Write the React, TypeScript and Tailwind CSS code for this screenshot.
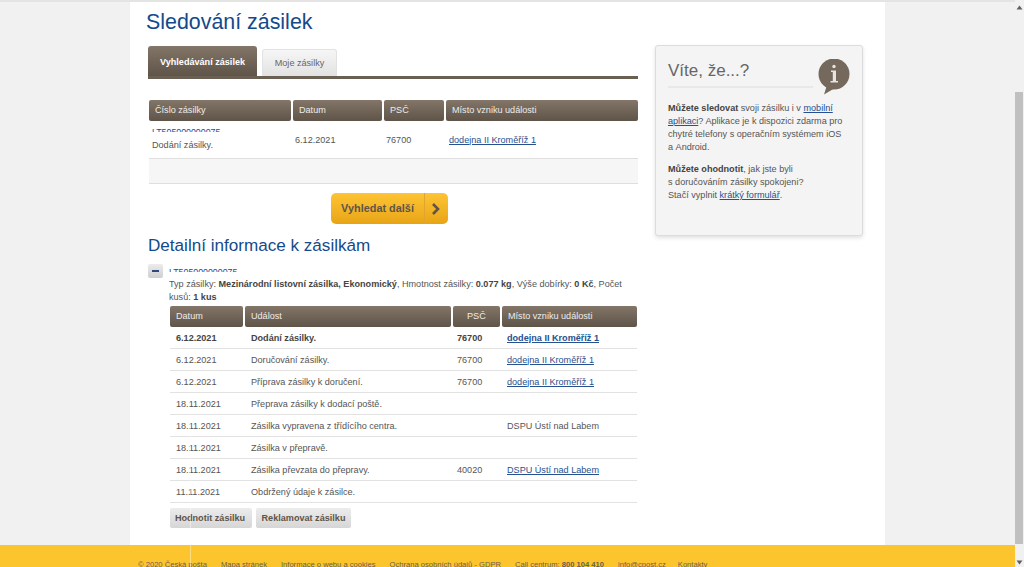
const hdr = "bg-gradient-to-b from-[#837669] to-[#5f5448] text-[#f0ece8] font-normal text-left rounded-[2px] flex items-center";
const linkC = "text-[#26508f] underline";

function InfoIcon() {
  return (
    <svg width="32" height="36" viewBox="0 0 32 36" className="shrink-0">
      <circle cx="16" cy="15" r="15.5" fill="#75695d" />
      <path d="M9 26 L6 35.5 L17 29 Z" fill="#75695d" />
      <circle cx="16" cy="7.5" r="1.7" fill="#e8e4e0" />
      <path d="M13 11.5 h5 v10.5 h2 v1.5 h-7.5 v-1.5 h2.3 v-9 h-1.8 z" fill="#e8e4e0" />
    </svg>
  );
}

const rows: [string, string, string, string, boolean][] = [
  ["6.12.2021", "Dodání zásilky.", "76700", "dodejna II Kroměříž 1", true],
  ["6.12.2021", "Doručování zásilky.", "76700", "dodejna II Kroměříž 1", true],
  ["6.12.2021", "Příprava zásilky k doručení.", "76700", "dodejna II Kroměříž 1", true],
  ["18.11.2021", "Přeprava zásilky k dodací poště.", "", "", false],
  ["18.11.2021", "Zásilka vypravena z třídícího centra.", "", "DSPU Ústí nad Labem", false],
  ["18.11.2021", "Zásilka v přepravě.", "", "", false],
  ["18.11.2021", "Zásilka převzata do přepravy.", "40020", "DSPU Ústí nad Labem", true],
  ["11.11.2021", "Obdržený údaje k zásilce.", "", "", false],
];

export default function App() {
  return (
    <div className="h-[567px] w-[1024px] overflow-hidden flex relative bg-[#f1f1f1] text-[9.1px] leading-[13px] text-[#555555] font-['Liberation_Sans',Arial,sans-serif]">
      <div className="w-[1015px] shrink-0 flex flex-col">
        <div className="h-[2px] bg-[#e4e4e4] shrink-0" />
        <div className="flex-1 flex min-h-0">
          <div className="w-[130px] shrink-0" />
          <main className="w-[755px] shrink-0 bg-white flex pl-[16px] min-h-0">
            <div className="w-[492px] shrink-0">
              <h1 className="text-[21.4px] leading-[26px] text-[#134a8c] mt-[7px] font-normal">Sledování zásilek</h1>

              <div className="mt-[11px] ml-[2px] flex items-end gap-[5px] h-[30px]">
                <div className="w-[109px] h-[30px] pt-[3px] rounded-t-[3px] bg-gradient-to-b from-[#837669] to-[#5f5448] text-white font-bold flex items-center justify-center">Vyhledávání zásilek</div>
                <div className="w-[75px] h-[27px] rounded-t-[3px] border border-b-0 border-[#e2e2e2] bg-gradient-to-b from-[#f6f6f6] to-[#e2e2e2] text-[#666666] flex items-center justify-center">Moje zásilky</div>
              </div>
              <div className="h-[3px] ml-[2px] bg-[#6a5f53]" />

              <div className="mt-[21px] ml-[3px] w-[489px]">
                <div className="flex gap-[2px] h-[21px]">
                  <div className={hdr + " w-[142px] px-[6px]"}>Číslo zásilky</div>
                  <div className={hdr + " w-[89px] px-[6px]"}>Datum</div>
                  <div className={hdr + " w-[60px] px-[6px]"}>PSČ</div>
                  <div className={hdr + " flex-1 px-[6px]"}>Místo vzniku události</div>
                </div>
                <div className="flex h-[38px] items-center border-b border-[#dedede]">
                  <div className="w-[146px] pl-[3px] self-start">
                    <div className="h-[3px] mt-[8px] overflow-hidden relative">
                      <span className="absolute left-0 -top-[3px] text-[#1a4a9c] text-[8.8px] leading-[13px] whitespace-nowrap">LT505000000075</span>
                    </div>
                    <div className="mt-[7px]">Dodání zásilky.</div>
                  </div>
                  <div className="w-[91px] mt-[1px]">6.12.2021</div>
                  <div className="w-[63px] mt-[1px]">76700</div>
                  <a className={linkC + " mt-[1px]"}>dodejna II Kroměříž 1</a>
                </div>
                <div className="h-[25px] bg-[#f6f6f6] border-b border-[#dedede]" />
              </div>

              <div className="mt-[9px] ml-[185px] w-[117px] h-[31px] rounded-[5px] bg-gradient-to-b from-[#fdc433] to-[#e8a515] flex items-center text-[#5e5548] font-bold text-[10.9px]">
                <span className="w-[93px] text-center">Vyhledat další</span>
                <span className="w-px h-full bg-[#e0a52c]" />
                <svg width="23" height="14" viewBox="0 0 23 14"><path d="M8 2 L13 7 L8 12" fill="none" stroke="#5e5548" strokeWidth="2.6" /></svg>
              </div>

              <h2 className="text-[17.1px] leading-[20px] text-[#134a8c] font-normal mt-[12px] ml-[2px]">Detailní informace k zásilkám</h2>

              <div className="flex mt-[10px] ml-[2px]">
                <div className="w-[15px] h-[14px] -mt-[2px] bg-gradient-to-b from-[#ececec] to-[#cfcfcf] rounded-[2px] flex items-center justify-center shrink-0">
                  <span className="w-[7px] h-[2px] bg-[#2b4a7a]" />
                </div>
                <div className="ml-[6px] flex-1">
                  <div className="h-[3px] mt-[3px] overflow-hidden relative">
                    <span className="absolute left-0 -top-[3px] text-[#1a4a9c] text-[8.8px] leading-[13px] whitespace-nowrap">LT505000000075</span>
                  </div>
                  <p className="mt-[6px] leading-[13px]">Typ zásilky: <b className="text-[#444444]">Mezinárodní listovní zásilka, Ekonomický</b>, Hmotnost zásilky: <b className="text-[#444444]">0.077 kg</b>, Výše dobírky: <b className="text-[#444444]">0 Kč</b>, Počet kusů: <b className="text-[#444444]">1 kus</b></p>
                  <div className="flex gap-[2px] h-[21px] mt-[2px] ml-[1px] w-[467px]">
                    <div className={hdr + " w-[73px] px-[6px]"}>Datum</div>
                    <div className={hdr + " w-[206px] px-[6px]"}>Událost</div>
                    <div className={hdr + " w-[47px] pl-[14px]"}>PSČ</div>
                    <div className={hdr + " flex-1 px-[6px]"}>Místo vzniku události</div>
                  </div>
                  {rows.map((r, i) => (
                    <div key={i} className={"flex items-center border-b border-[#e2e2e2] ml-[1px] w-[467px] h-[22px] pt-[1px] " + (i === 0 ? "font-bold text-[#444444]" : "")}>
                      <div className="w-[81px] pl-[6px]">{r[0]}</div>
                      <div className="w-[206px]">{r[1]}</div>
                      <div className="w-[50px]">{r[2]}</div>
                      {r[4] ? <a className={linkC}>{r[3]}</a> : <span>{r[3]}</span>}
                    </div>
                  ))}
                  <div className="flex gap-[4px] mt-[5px] ml-[1px] text-[#5e5548] font-bold">
                    <div className="w-[82px] h-[20px] pr-[2px] rounded-[2px] bg-gradient-to-b from-[#ececec] to-[#d6d6d6] flex items-center justify-center">Hodnotit zásilku</div>
                    <div className="w-[95px] h-[20px] rounded-[2px] bg-gradient-to-b from-[#ececec] to-[#d6d6d6] flex items-center justify-center">Reklamovat zásilku</div>
                  </div>
                </div>
              </div>
            </div>

            <aside className="w-[208px] h-[191px] ml-[17px] mt-[43px] bg-[#f4f4f4] border border-[#dcdcdc] rounded-[3px] shadow-[0_2px_4px_rgba(0,0,0,0.12)] px-[12px] pt-[13px] shrink-0">
              <div className="flex h-[43px]">
                <div className="w-[145px] shrink-0 h-[29px] border-b-2 border-[#e8e8e8] text-[17px] leading-[24px] text-[#666666]">Víte, že...?</div>
                <div className="ml-[5px]"><InfoIcon /></div>
              </div>
              <p className="leading-[13px]"><b className="text-[#444444]">Můžete sledovat</b> svoji zásilku i v <a className={linkC}>mobilní aplikaci</a>? Aplikace je k dispozici zdarma pro chytré telefony s operačním systémem iOS a&nbsp;Android.</p>
              <p className="mt-[9px] leading-[13px]"><b className="text-[#444444]">Můžete ohodnotit</b>, jak jste byli<br />s doručováním zásilky spokojeni?<br />Stačí vyplnit <a className={linkC}>krátký formulář</a>.</p>
            </aside>
          </main>
        </div>
        <footer className="h-[22px] shrink-0 bg-[#fdc52d] pl-[138px] pt-[15px] flex gap-[14px] text-[7.6px] leading-[10px] text-[#6a5f4c] whitespace-nowrap overflow-hidden">
          <span>© 2020 Česká pošta</span><span>Mapa stránek</span><span>Informace o webu a cookies</span><span>Ochrana osobních údajů - GDPR</span><span>Call centrum: <b>800 104 410</b></span><span>info@cpost.cz</span><span className="-ml-[2px]">Kontakty</span>
        </footer>
      </div>
      <div className="w-[9px] shrink-0 flex flex-col items-center">
        <svg width="7" height="5" viewBox="0 0 7 5" className="mt-[5px] ml-[-1px]"><path d="M3.5 0.5 L6.5 4.5 H0.5 Z" fill="#606060" /></svg>
        <div className="mt-[82px] w-[8px] h-[452px] bg-[#c0c0c0] self-start" />
        <svg width="7" height="5" viewBox="0 0 7 5" className="mt-[16px] ml-[-1px]"><path d="M0.5 0.5 H6.5 L3.5 4.5 Z" fill="#606060" /></svg>
      </div>
      <div className="absolute left-[190px] top-[410px] bottom-0 w-px bg-white/40" />
    </div>
  );
}
